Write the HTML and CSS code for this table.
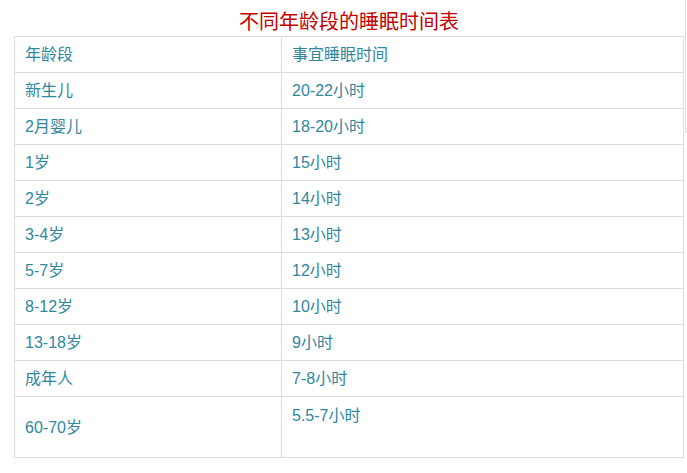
FILE: index.html
```html
<!DOCTYPE html>
<html lang="zh-CN">
<head>
<meta charset="utf-8">
<title>不同年龄段的睡眠时间表</title>
<link rel="stylesheet" href="styles.css">
</head>
<body>
<div class="page">
  <div class="edge"></div>
  <h1 class="title">不同年龄段的睡眠时间表</h1>
  <table class="sleep">
    <colgroup><col class="c1"><col class="c2"></colgroup>
    <tbody>
      <tr><td>年龄段</td><td>事宜睡眠时间</td></tr>
      <tr><td>新生儿</td><td>20-22小时</td></tr>
      <tr><td>2月婴儿</td><td>18-20小时</td></tr>
      <tr><td>1岁</td><td>15小时</td></tr>
      <tr><td>2岁</td><td>14小时</td></tr>
      <tr><td>3-4岁</td><td>13小时</td></tr>
      <tr><td>5-7岁</td><td>12小时</td></tr>
      <tr><td>8-12岁</td><td>10小时</td></tr>
      <tr><td>13-18岁</td><td>9小时</td></tr>
      <tr><td>成年人</td><td>7-8小时</td></tr>
      <tr class="last"><td>60-70岁</td><td class="top">5.5-7小时</td></tr>
    </tbody>
  </table>
</div>
</body>
</html>
```
FILE: styles.css
```css
html, body {
  margin: 0;
  padding: 0;
  background: #ffffff;
}
body {
  font-family: "Liberation Sans", "Noto Sans CJK SC", sans-serif;
}
.page {
  position: relative;
  width: 687px;
  height: 473px;
  padding-left: 14px;
  box-sizing: border-box;
}
.edge {
  position: absolute;
  left: 685px;
  top: 0;
  width: 1px;
  height: 133px;
  background: #dcdcdc;
}
.edge::after {
  content: "";
  position: absolute;
  left: 0;
  bottom: 0;
  width: 2px;
  height: 1px;
  background: #dcdcdc;
}
.title {
  margin: 0;
  width: 670px;
  height: 36px;
  box-sizing: border-box;
  padding-top: 8px;
  font-size: 20px;
  line-height: 28px;
  font-weight: normal;
  text-align: center;
  color: #c40000;
}
.sleep {
  border-collapse: collapse;
  width: 670px;
  table-layout: fixed;
}
.c1 { width: 267px; }
.sleep td {
  border: 1px solid #dddddd;
  height: 36px;
  box-sizing: border-box;
  padding: 0 10px;
  font-size: 16px;
  line-height: 21px;
  color: #2f87a0;
  vertical-align: middle;
  white-space: nowrap;
}
.sleep tr.last td {
  height: 61px;
}
.sleep td.top {
  vertical-align: top;
  padding-top: 8px;
}
```
